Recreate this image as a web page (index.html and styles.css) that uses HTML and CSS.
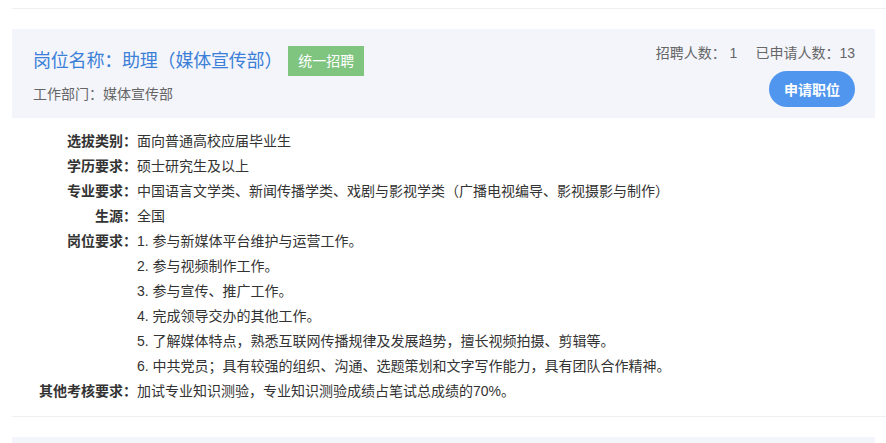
FILE: index.html
```html
<!DOCTYPE html>
<html lang="zh-CN">
<head>
<meta charset="utf-8">
<link rel="stylesheet" href="styles.css">
</head>
<body>
<div class="list">
  <div class="divider"></div>
  <div class="job">
    <div class="job-head">
      <div class="head-left">
        <div class="title-row">
          <span class="title">岗位名称：助理（媒体宣传部）</span>
          <span class="badge">统一招聘</span>
        </div>
        <div class="dept">工作部门：媒体宣传部</div>
      </div>
      <div class="head-right">
        <div class="counts"><span>招聘人数： 1</span><span class="applied">已申请人数：13</span></div>
        <button class="apply">申请职位</button>
      </div>
    </div>
    <dl class="details">
      <dt>选拔类别：</dt><dd>面向普通高校应届毕业生</dd>
      <dt>学历要求：</dt><dd>硕士研究生及以上</dd>
      <dt>专业要求：</dt><dd>中国语言文学类、新闻传播学类、戏剧与影视学类（广播电视编导、影视摄影与制作）</dd>
      <dt>生源：</dt><dd>全国</dd>
      <dt>岗位要求：</dt>
      <dd>
        <div>1. 参与新媒体平台维护与运营工作。</div>
        <div>2. 参与视频制作工作。</div>
        <div>3. 参与宣传、推广工作。</div>
        <div>4. 完成领导交办的其他工作。</div>
        <div>5. 了解媒体特点，熟悉互联网传播规律及发展趋势，擅长视频拍摄、剪辑等。</div>
        <div>6. 中共党员；具有较强的组织、沟通、选题策划和文字写作能力，具有团队合作精神。</div>
      </dd>
      <dt>其他考核要求：</dt><dd>加试专业知识测验，专业知识测验成绩占笔试总成绩的70%。</dd>
    </dl>
  </div>
  <div class="divider"></div>
  <div class="job">
    <div class="job-head job-head-next"></div>
  </div>
</div>
</body>
</html>
```
FILE: styles.css
```css
html, body {
  margin: 0;
  padding: 0;
  background: #ffffff;
  font-family: "Liberation Sans", "Noto Sans CJK SC", sans-serif;
  overflow: hidden;
}
.list {
  padding-left: 12px;
  padding-top: 8px;
}
.divider {
  height: 1px;
  background: #eef0f4;
}
.job {
  padding-top: 20px;
}
.job-head {
  margin-right: 11px;
  background: #f3f5fb;
  display: flex;
  justify-content: space-between;
  align-items: flex-start;
  padding: 0 20px 0 21px;
  min-height: 89px;
  box-sizing: border-box;
}
.job-head-next {
  min-height: 6px;
}
.head-left {
  padding-top: 17px;
}
.title-row {
  display: flex;
  align-items: center;
  height: 30px;
}
.title {
  font-size: 18px;
  line-height: 30px;
  color: #3b7fd7;
  letter-spacing: -0.2px;
}
.badge {
  margin-left: 6px;
  background: #7fc47f;
  color: #ffffff;
  font-size: 14px;
  line-height: 30px;
  height: 30px;
  padding: 0 10px;
}
.dept {
  margin-top: 8px;
  font-size: 14px;
  line-height: 20px;
  color: #666666;
}
.head-right {
  padding-top: 14px;
  display: flex;
  flex-direction: column;
  align-items: flex-end;
}
.counts {
  font-size: 14px;
  line-height: 20px;
  color: #666666;
}
.applied {
  margin-left: 18px;
}
.apply {
  margin-top: 8px;
  width: 86px;
  height: 36px;
  border: none;
  border-radius: 18px;
  background: #5096ee;
  color: #ffffff;
  font-family: inherit;
  font-size: 14px;
  font-weight: bold;
  padding: 0;
}
.details {
  margin: 0;
  padding: 11px 0 12px;
  display: grid;
  grid-template-columns: 125px 1fr;
  font-size: 14px;
  line-height: 25px;
  color: #333333;
}
.details dt {
  text-align: right;
  font-weight: bold;
  color: #333333;
}
.details dd {
  margin: 0;
}
```
